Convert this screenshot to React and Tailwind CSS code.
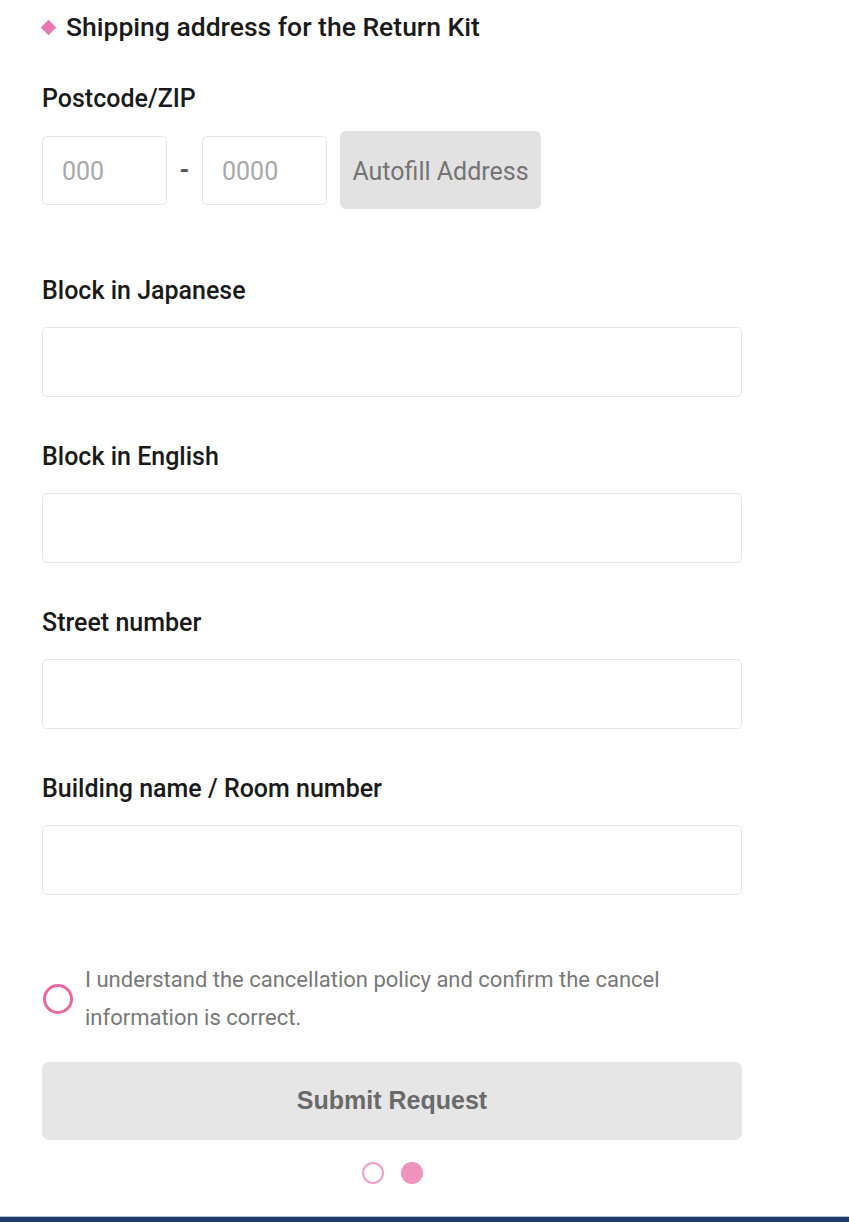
import React from "react";

function Field({ label }) {
  return (
    <div className="flex flex-col">
      <div className="text-[25px] leading-[30px] font-medium text-[#1a1a1a]">{label}</div>
      <div className="mt-[21px] h-[70px] w-[700px] rounded-[5px] border border-[#e6e6e6] bg-white" />
      <div className="h-[45px]" />
    </div>
  );
}

export default function App() {
  return (
    <div
      className="relative flex h-[1222px] w-[849px] flex-col bg-white"
      style={{ fontFamily: "Roboto, 'Noto Sans', sans-serif" }}
    >
      <div className="flex flex-1 flex-col pl-[42px]">
        <div className="mt-[11px] flex h-[32px] items-center">
          <div className="ml-[1px] h-[11px] w-[11px] rotate-45 bg-[#e879b0]" />
          <div className="ml-[12px] text-[26.5px] font-medium leading-[32px] text-[#1a1a1a]">
            Shipping address for the Return Kit
          </div>
        </div>

        <div className="mt-[42px] text-[25px] font-medium leading-[28px] text-[#1a1a1a]">Postcode/ZIP</div>

        <div className="mt-[18px] flex h-[78px] items-center">
          <div className="flex h-[69px] w-[125px] items-center rounded-[5px] border border-[#e6e6e6] pl-[19px] pt-[3px] text-[25px] text-[#a8a8a8]">
            000
          </div>
          <div className="flex w-[35px] justify-center pt-[2px] text-[25px] font-bold text-[#555]">-</div>
          <div className="flex h-[69px] w-[125px] items-center rounded-[5px] border border-[#e6e6e6] pl-[19px] pt-[3px] text-[25px] text-[#a8a8a8]">
            0000
          </div>
          <div className="ml-[13px] flex h-[78px] w-[201px] items-center justify-center rounded-[6px] bg-[#e2e2e2] pt-[3px] text-[25px] text-[#747474]">
            Autofill Address
          </div>
        </div>

        <div className="mt-[67px] flex flex-col">
          <Field label="Block in Japanese" />
          <Field label="Block in English" />
          <Field label="Street number" />
          <Field label="Building name / Room number" />
        </div>

        <div className="mt-[21px] flex w-[720px] items-center">
          <div className="ml-[1px] h-[30px] w-[30px] shrink-0 rounded-full border-[3px] border-[#e8689f]" />
          <div className="ml-[12px] text-[22px] leading-[38px] text-[#787878]">
            I understand the cancellation policy and confirm the cancel
            <br />
            information is correct.
          </div>
        </div>

        <div
          className="mt-[25px] flex h-[78px] w-[700px] items-center justify-center rounded-[7px] bg-[#e6e6e6] text-[25px] font-bold text-[#6a6a6a]"
          style={{ fontFamily: "'Liberation Sans', Arial, sans-serif" }}
        >
          Submit Request
        </div>

        <div className="mt-[22px] flex w-[700px] justify-center gap-[17px]">
          <div className="h-[22px] w-[22px] rounded-full border-2 border-[#f0a0c8] bg-white" />
          <div className="h-[22px] w-[22px] rounded-full bg-[#ee93bd]" />
        </div>
      </div>
      <div className="h-[6px] w-full border-t border-[#b8c2cf] bg-[#1f3b6b]" />
    </div>
  );
}
